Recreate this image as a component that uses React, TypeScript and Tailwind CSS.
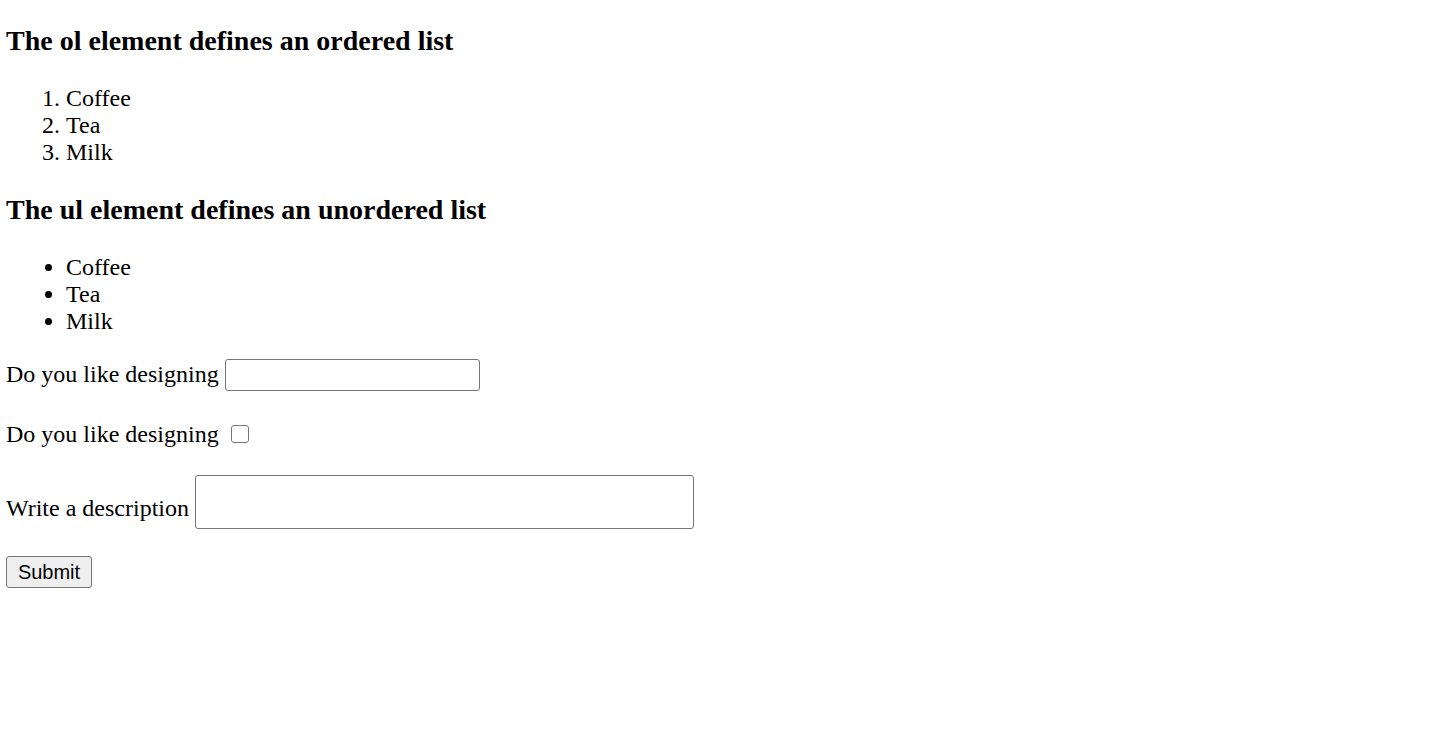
const coffee = ["Coffee", "Tea", "Milk"];

export default function App() {
  return (
    <div className="min-h-[750px] bg-white pl-[6px] pt-[25px] font-['Liberation_Serif',serif] text-[24px] leading-[1.15] text-black">
      <h3 className="text-[28px] font-bold leading-[1.15]">The ol element defines an ordered list</h3>
      <ol className="mt-[28px] list-decimal pl-[60px] leading-[27px]">
        {coffee.map((item) => (
          <li key={item}>{item}</li>
        ))}
      </ol>
      <h3 className="mt-[28px] text-[28px] font-bold leading-[1.15]">The ul element defines an unordered list</h3>
      <ul className="mt-[28px] list-disc pl-[60px] leading-[27px]">
        {coffee.map((item) => (
          <li key={item}>{item}</li>
        ))}
      </ul>
      <form className="mt-[24px] flex flex-col items-start" onSubmit={(e) => e.preventDefault()}>
        <div className="flex h-[32px] items-center gap-[6px]">
          <label className="-mt-[2px]">Do you like designing</label>
          <input type="text" className="h-[32px] w-[255px] rounded-[3px] border border-[#767676] bg-white" />
        </div>
        <div className="mt-[30px] flex h-[28px] items-center gap-[12px]">
          <label className="-mt-[2px]">Do you like designing</label>
          <input type="checkbox" className="-mt-[2px] h-[18px] w-[18px] appearance-none rounded-[3px] border border-[#767676] bg-white" />
        </div>
        <div className="mt-[26px] flex items-end gap-[6px]">
          <label className="mb-[7px]">Write a description</label>
          <textarea className="h-[54px] w-[499px] resize-none rounded-[3px] border border-[#767676] bg-white" />
        </div>
        <button
          type="submit"
          className="mt-[27px] h-[32px] w-[86px] rounded-[3px] border border-[#767676] bg-[#efefef] font-['Liberation_Sans',Arial,sans-serif] text-[20px] leading-none"
        >
          Submit
        </button>
      </form>
    </div>
  );
}
